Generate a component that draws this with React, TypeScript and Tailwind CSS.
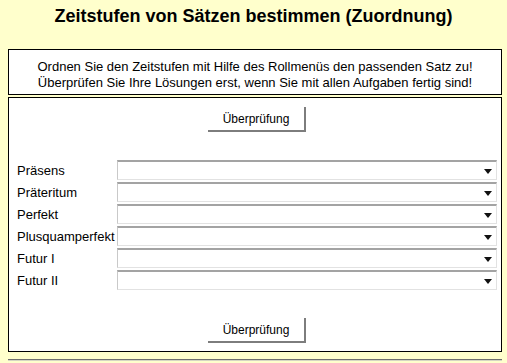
const tenses = ["Präsens", "Präteritum", "Perfekt", "Plusquamperfekt", "Futur I", "Futur II"];

const CheckButton = () => (
  <div className="flex justify-center">
    <button
      type="button"
      className="h-[25px] w-[98px] bg-white border-r-2 border-b-2 border-[#7d7d7d] text-[12px] leading-[23px] text-black pt-[1px]"
    >
      Überprüfung
    </button>
  </div>
);

const FakeSelect = () => (
  <div className="relative h-[20px] w-[381px] bg-white border-t-2 border-l border-r border-b border-t-[#a3a3a3] border-l-[#c9c9c9] border-r-[#e2e2e2] border-b-[#e2e2e2]">
    <svg
      className="absolute right-[4px] top-[7px]"
      width="8"
      height="5"
      viewBox="0 0 8 5"
    >
      <path d="M0 0h8L4 5z" fill="#111" />
    </svg>
  </div>
);

export default function App() {
  return (
    <div className="w-[507px] h-[363px] overflow-hidden bg-[#ffffcc] text-black font-['Liberation_Sans',Arial,sans-serif]">
      <h1 className="pt-[6px] text-center text-[18px] font-bold leading-[21px]">
        Zeitstufen von Sätzen bestimmen (Zuordnung)
      </h1>

      {/* Instructions */}
      <div className="mt-[22px] ml-[8px] w-[494px] border border-black bg-white pt-[9px] pb-[3px] text-center text-[13px] leading-[16px]">
        <p>Ordnen Sie den Zeitstufen mit Hilfe des Rollmenüs den passenden Satz zu!</p>
        <p>Überprüfen Sie Ihre Lösungen erst, wenn Sie mit allen Aufgaben fertig sind!</p>
      </div>

      {/* Exercise */}
      <div className="mt-[2px] ml-[8px] w-[494px] h-[255px] border border-black bg-white pt-[9px] pl-[8px] pr-[4px]">
        <CheckButton />

        <div className="mt-[28px] flex flex-col gap-[2px]">
          {tenses.map((t) => (
            <div key={t} className="flex items-center h-[20px]">
              <span className="w-[100px] text-[13px] leading-[15px] whitespace-nowrap">{t}</span>
              <FakeSelect />
            </div>
          ))}
        </div>

        <div className="mt-[28px]">
          <CheckButton />
        </div>
      </div>

      <div className="mt-[7px] ml-[8px] w-[494px] border-t border-t-[#6f6f6f] border-b border-b-[#d6d6c4]" />
    </div>
  );
}
